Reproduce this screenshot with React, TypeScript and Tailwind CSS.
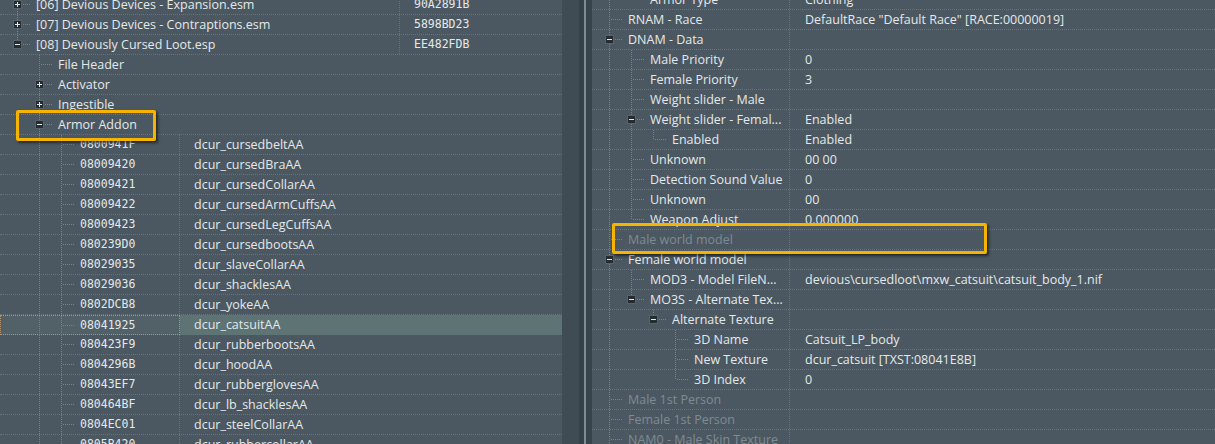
import React from "react";

type Node = {
  level: number;
  guides?: number[];
  last?: boolean;
  exp?: "+" | "-";
  text: string;
  value?: string;
  dim?: boolean;
};

const LINE = "#75838b";

const Gutter: React.FC<{ node: Node }> = ({ node }) => {
  const { level, guides = [], last, exp } = node;
  const cells = [];
  for (let i = 0; i < level; i++) {
    cells.push(
      <svg key={i} width="22" height="19" className="shrink-0">
        {guides.includes(i) && (
          <line x1="4.5" y1="0" x2="4.5" y2="19" stroke={LINE} strokeDasharray="1 1" />
        )}
      </svg>
    );
  }
  cells.push(
    <svg key="own" width="22" height="19" className="shrink-0">
      <line x1="4.5" y1="0" x2="4.5" y2={last ? 10 : 19} stroke={LINE} strokeDasharray="1 1" />
      <line x1="6" y1="9.5" x2="18" y2="9.5" stroke={LINE} strokeDasharray="1 1" />
      {exp && (
        <g>
          <rect x="0.5" y="5.5" width="8" height="8" fill="#262d31" stroke="#55636a" />
          <line x1="2" y1="9.5" x2="7" y2="9.5" stroke="#e6e9ea" />
          {exp === "+" && <line x1="4.5" y1="7" x2="4.5" y2="12" stroke="#e6e9ea" />}
        </g>
      )}
    </svg>
  );
  return <div className="flex shrink-0">{cells}</div>;
};

const plugins: (Node & { hash: string })[] = [
  { level: 0, exp: "+", text: "[06] Devious Devices - Expansion.esm", hash: "90A2891B" },
  { level: 0, exp: "+", text: "[07] Devious Devices - Contraptions.esm", hash: "5898BD23" },
  { level: 0, exp: "-", last: true, text: "[08] Deviously Cursed Loot.esp", hash: "EE482FDB" },
];

const groups: Node[] = [
  { level: 1, text: "File Header" },
  { level: 1, exp: "+", text: "Activator" },
  { level: 1, exp: "+", text: "Ingestible" },
  { level: 1, exp: "-", text: "Armor Addon" },
];

const records: [string, string][] = [
  ["0800941F", "dcur_cursedbeltAA"],
  ["08009420", "dcur_cursedBraAA"],
  ["08009421", "dcur_cursedCollarAA"],
  ["08009422", "dcur_cursedArmCuffsAA"],
  ["08009423", "dcur_cursedLegCuffsAA"],
  ["080239D0", "dcur_cursedbootsAA"],
  ["08029035", "dcur_slaveCollarAA"],
  ["08029036", "dcur_shacklesAA"],
  ["0802DCB8", "dcur_yokeAA"],
  ["08041925", "dcur_catsuitAA"],
  ["080423F9", "dcur_rubberbootsAA"],
  ["0804296B", "dcur_hoodAA"],
  ["08043EF7", "dcur_rubberglovesAA"],
  ["080464BF", "dcur_lb_shacklesAA"],
  ["0804EC01", "dcur_steelCollarAA"],
  ["0805B420", "dcur_rubbercollarAA"],
];

const fields: Node[] = [
  { level: 1, guides: [0], last: true, text: "Armor Type", value: "Clothing" },
  { level: 0, text: "RNAM - Race", value: 'DefaultRace "Default Race" [RACE:00000019]' },
  { level: 0, exp: "-", text: "DNAM - Data" },
  { level: 1, guides: [0], text: "Male Priority", value: "0" },
  { level: 1, guides: [0], text: "Female Priority", value: "3" },
  { level: 1, guides: [0], text: "Weight slider - Male" },
  { level: 1, guides: [0], exp: "-", text: "Weight slider - Femal...", value: "Enabled" },
  { level: 2, guides: [0, 1], last: true, text: "Enabled", value: "Enabled" },
  { level: 1, guides: [0], text: "Unknown", value: "00 00" },
  { level: 1, guides: [0], text: "Detection Sound Value", value: "0" },
  { level: 1, guides: [0], text: "Unknown", value: "00" },
  { level: 1, guides: [0], last: true, text: "Weapon Adjust", value: "0.000000" },
  { level: 0, dim: true, text: "Male world model" },
  { level: 0, exp: "-", text: "Female world model" },
  { level: 1, guides: [0], text: "MOD3 - Model FileN...", value: "devious\\cursedloot\\mxw_catsuit\\catsuit_body_1.nif" },
  { level: 1, guides: [0], last: true, exp: "-", text: "MO3S - Alternate Tex..." },
  { level: 2, guides: [0], last: true, exp: "-", text: "Alternate Texture" },
  { level: 3, guides: [0], text: "3D Name", value: "Catsuit_LP_body" },
  { level: 3, guides: [0], text: "New Texture", value: "dcur_catsuit [TXST:08041E8B]" },
  { level: 3, guides: [0], last: true, text: "3D Index", value: "0" },
  { level: 0, dim: true, text: "Male 1st Person" },
  { level: 0, dim: true, text: "Female 1st Person" },
  { level: 0, dim: true, text: "NAM0 - Male Skin Texture" },
];

const rowCls = "flex h-[20px] border-b border-dotted border-[#66747c] leading-[19px] whitespace-nowrap";
const mono = "font-['DejaVu_Sans_Mono',monospace] text-[11.5px] text-[#e4e8ea]";

export default function App() {
  return (
    <div
      className="relative flex h-[444px] w-[1215px] overflow-hidden bg-[#4b5861] text-[12.5px] text-[#e4e8ea]"
      style={{ fontFamily: '"Open Sans", "Noto Sans", sans-serif' }}
    >
      {/* left: record tree */}
      <div className="w-[562px] shrink-0 overflow-hidden">
        <div className="-mt-[5px]">
          {plugins.map((p) => (
            <div key={p.text} className={rowCls}>
              <div className="flex w-[400px] shrink-0 border-r border-dotted border-[#66747c] pl-[13px]">
                <Gutter node={p} />
                <span className="pl-px">{p.text}</span>
              </div>
              <span className={`pl-[14px] ${mono}`}>{p.hash}</span>
            </div>
          ))}
          {groups.map((g) => (
            <div key={g.text} className={rowCls}>
              <div className="flex pl-[13px]">
                <Gutter node={{ ...g, guides: [] }} />
                <span className="pl-px">{g.text}</span>
              </div>
            </div>
          ))}
          {records.map(([id, name]) => {
            const sel = id === "08041925";
            return (
              <div key={id} className={sel ? "flex h-[20px] leading-[19px] whitespace-nowrap" : rowCls}>
                <div
                  className={
                    sel
                      ? "flex h-[20px] w-[180px] shrink-0 border border-dotted border-[#b09474] bg-[#526068] pl-[12px]"
                      : "flex w-[180px] shrink-0 border-r border-dotted border-[#66747c] pl-[13px]"
                  }
                >
                  <Gutter node={{ level: 2, guides: [1], text: id }} />
                  <span className={`pl-px ${mono}`}>{id}</span>
                </div>
                <div className={sel ? "flex-1 bg-[#5d7374] pl-[14px]" : "flex-1 pl-[14px]"}>{name}</div>
              </div>
            );
          })}
        </div>
      </div>

      {/* scrollbar + splitter */}
      <div className="w-[17px] shrink-0 bg-[#3f4c54]" />
      <div className="w-[5px] shrink-0 bg-[#35414a]" />
      <div className="w-[2px] shrink-0 bg-[#808b91]" />
      <div className="w-[6px] shrink-0 bg-[#38444c]" />

      {/* right: record view */}
      <div className="flex-1 overflow-hidden">
        <div className="-mt-[10px]">
          {fields.map((f, i) => (
            <div key={i} className={rowCls}>
              <div className="flex w-[198px] shrink-0 overflow-hidden border-r border-dotted border-[#66747c] pl-[13px]">
                <Gutter node={f} />
                <span className={f.dim ? "pl-px text-[#7e8b93]" : "pl-px"}>{f.text}</span>
              </div>
              <span className="pl-[15px]">{f.value ?? ""}</span>
            </div>
          ))}
        </div>
      </div>

      {/* annotation boxes */}
      <div className="pointer-events-none absolute left-[16px] top-[110px] h-[31px] w-[140px] rounded-[2px] border-[3px] border-[#f6b400] shadow-[2px_2px_3px_rgba(0,0,0,0.55)]" />
      <div className="pointer-events-none absolute left-[612px] top-[223px] h-[31px] w-[375px] rounded-[2px] border-[3px] border-[#f6b400] shadow-[2px_2px_3px_rgba(0,0,0,0.55)]" />
    </div>
  );
}
